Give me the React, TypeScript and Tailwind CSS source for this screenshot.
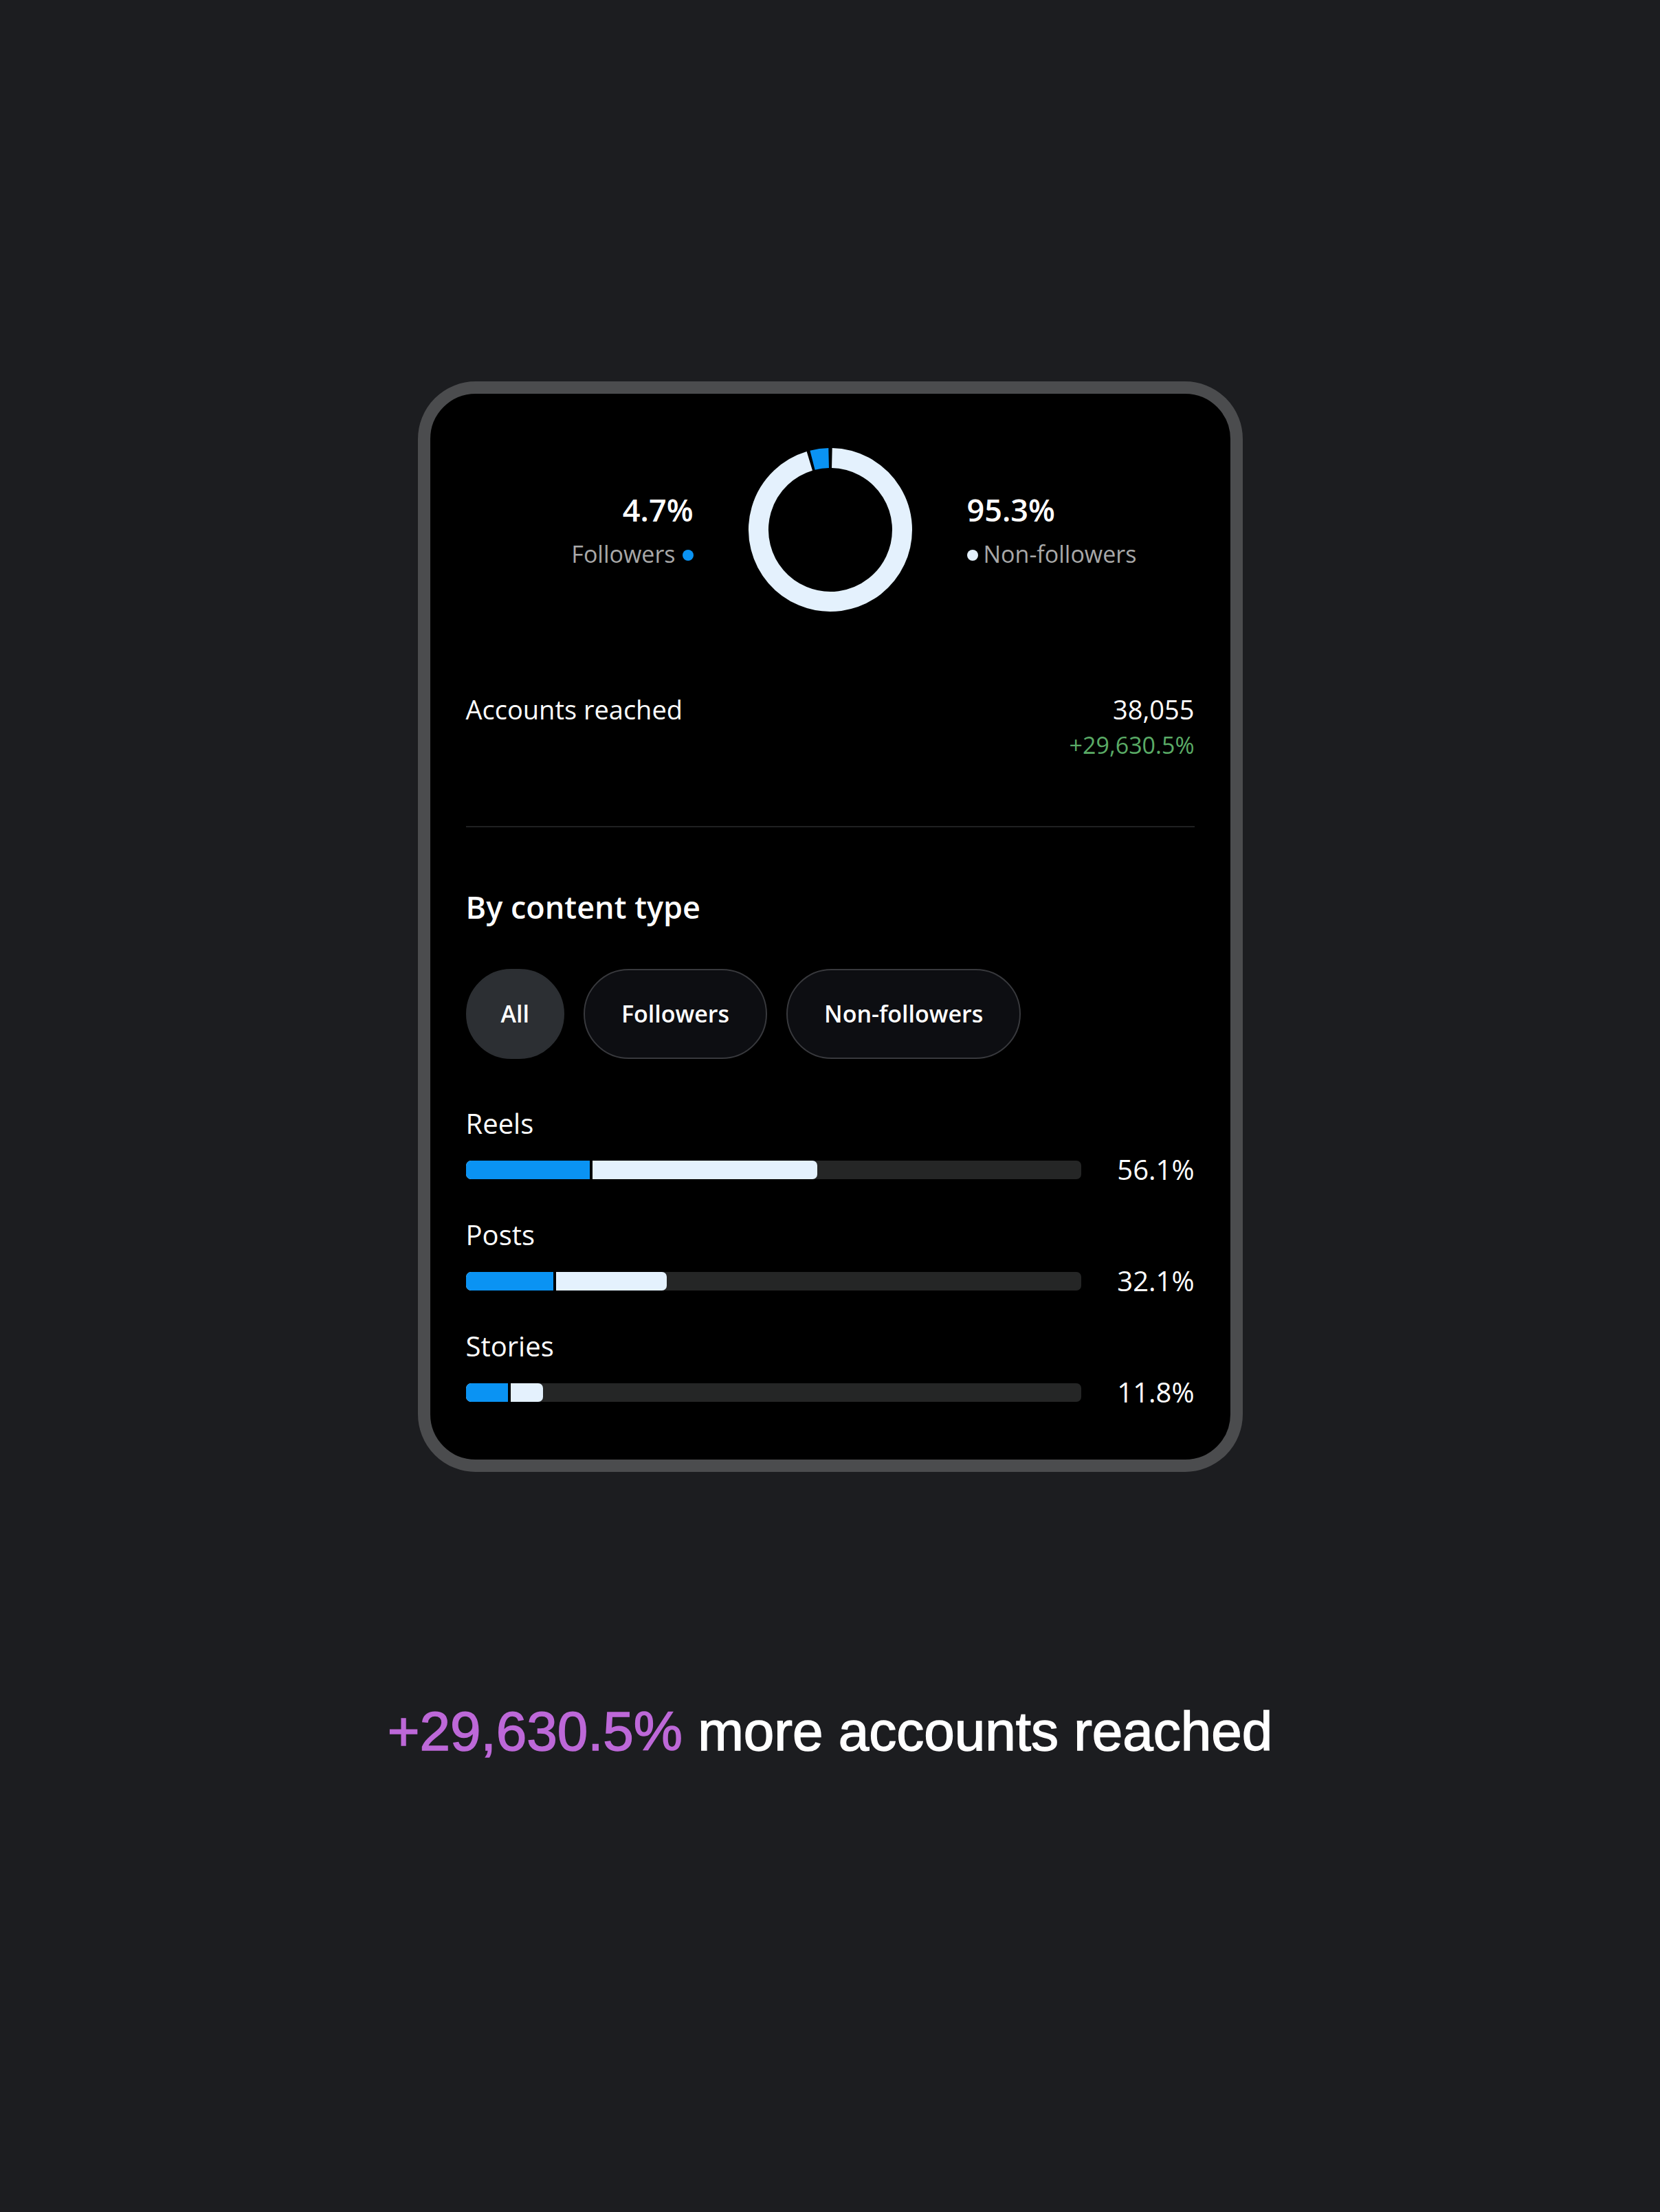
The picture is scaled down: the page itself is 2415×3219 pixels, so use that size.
const rows = [
  { label: "Reels", value: "56.1%", followers: 20.6, total: 57.2 },
  { label: "Posts", value: "32.1%", followers: 14.7, total: 32.7 },
  { label: "Stories", value: "11.8%", followers: 7.3, total: 12.6 },
];

const pills = ["All", "Followers", "Non-followers"];

function arc(from: number, to: number, r: number, c: number) {
  const point = (deg: number) => {
    const rad = (deg * Math.PI) / 180;
    return `${(c + r * Math.sin(rad)).toFixed(2)} ${(c - r * Math.cos(rad)).toFixed(2)}`;
  };
  const large = to - from > 180 ? 1 : 0;
  return `M ${point(from)} A ${r} ${r} 0 ${large} 1 ${point(to)}`;
}

function Donut() {
  return (
    <svg width="240" height="240" viewBox="0 0 240 240" className="block">
      <path d={arc(1.3, 343.2, 104.5, 120)} fill="none" stroke="#e4f1fd" strokeWidth="29" />
      <path d={arc(345.6, 358.7, 104.5, 120)} fill="none" stroke="#0a93f3" strokeWidth="29" />
    </svg>
  );
}

export default function App() {
  return (
    <div
      className="min-h-screen bg-[#1c1d20] pt-[555px]"
      style={{ fontFamily: '"Open Sans", "Noto Sans", sans-serif' }}
    >
      <div className="mx-auto w-[1200px] rounded-[84px] border-[18px] border-[#4b4c4e] bg-black px-[52px] pt-[78px] pb-[74px] text-white">
        {/* reach split */}
        <div className="grid grid-cols-[1fr_240px_1fr] items-center gap-x-[79px]">
          <div className="flex flex-col items-end">
            <span className="text-[45px] font-semibold leading-[50px]">4.7%</span>
            <span className="mt-[19px] flex items-center gap-[10px] text-[34px] leading-[40px] text-[#a8a8a8]">
              Followers
              <span className="mt-1 h-4 w-4 rounded-full bg-[#0a93f3]" />
            </span>
          </div>
          <Donut />
          <div className="flex flex-col items-start">
            <span className="text-[45px] font-semibold leading-[50px]">95.3%</span>
            <span className="mt-[19px] flex items-center gap-[8px] text-[34px] leading-[40px] text-[#a8a8a8]">
              <span className="mt-1 h-4 w-4 rounded-full bg-[#e4f1fd]" />
              Non-followers
            </span>
          </div>
        </div>

        <div className="mt-[117px] flex items-start justify-between">
          <span className="text-[38px] leading-[48px]">Accounts reached</span>
          <div className="flex flex-col items-end">
            <span className="text-[38px] leading-[48px]">38,055</span>
            <span className="mt-[7px] text-[34px] leading-[42px] text-[#5aab66]">+29,630.5%</span>
          </div>
        </div>

        <div className="mt-[97px] h-[2px] bg-[#1f2021]" />

        <h2 className="mt-[88px] text-[45px] font-semibold leading-[56px]">By content type</h2>

        <div className="mt-[62px] flex gap-[28px]">
          {pills.map((p, i) => (
            <button
              key={p}
              className={
                i === 0
                  ? "flex h-[131px] items-center rounded-full border-2 border-[#2c2f33] bg-[#2c2f33] px-[49px] text-[34px] font-semibold"
                  : "flex h-[131px] items-center rounded-full border-2 border-[#38393d] bg-[#0d0e12] px-[53px] text-[34px] font-semibold"
              }
            >
              {p}
            </button>
          ))}
        </div>

        <div className="mt-[70px] flex flex-col gap-[47px]">
          {rows.map((r) => (
            <div key={r.label}>
              <div className="text-[40px] leading-[48px]">{r.label}</div>
              <div className="mt-[19px] flex h-[48px] items-center">
                <div className="relative h-[27px] flex-1 overflow-hidden rounded-[7px] bg-[#252626]">
                  <div
                    className="absolute inset-y-0 left-0 rounded-[7px] bg-[#e4f1fd]"
                    style={{ width: `${r.total}%` }}
                  />
                  <div
                    className="absolute inset-y-0 left-0 rounded-l-[7px] border-r-[4px] border-black bg-[#0a93f3]"
                    style={{ width: `${r.followers}%` }}
                  />
                </div>
                <div className="w-[165px] text-right text-[40px] leading-[48px]">{r.value}</div>
              </div>
            </div>
          ))}
        </div>
      </div>

      <p
        className="mt-[338px] text-center text-[80px] leading-[80px] text-white [-webkit-text-stroke-width:1.5px]"
        style={{ fontFamily: '"Liberation Sans", Arial, sans-serif' }}
      >
        <span className="text-[#bd68d8]">+29,630.5%</span> more accounts reached
      </p>
    </div>
  );
}
